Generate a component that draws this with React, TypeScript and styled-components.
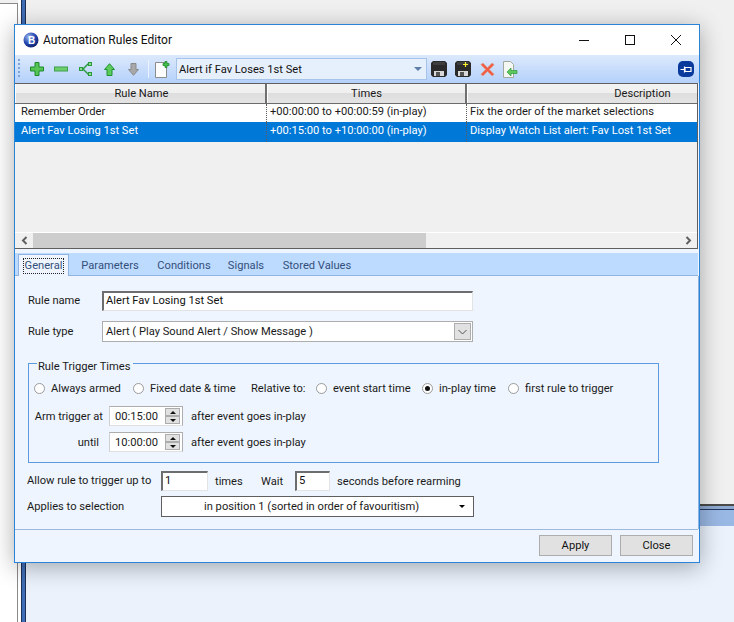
import React from "react";
import styled, { createGlobalStyle } from "styled-components";

const GlobalStyle = createGlobalStyle`
  html, body {
    margin: 0;
    padding: 0;
    background: #ffffff;
    overflow: hidden;
  }
  * {
    box-sizing: border-box;
  }
`;

const Desktop = styled.div`
  position: relative;
  display: flex;
  width: 734px;
  height: 622px;
  overflow: hidden;
  background: #f0f0f0;
  font-family: Roboto, "Liberation Sans", sans-serif;
  font-size: 11.15px;
  color: #1a1a1a;
`;
const BackMargin = styled.div`
  width: 18px;
  margin-top: 3px;
  background: #ffffff;
  border-top: 1px solid #8a8a8a;
  border-right: 1px solid #8a8a8a;
`;
const BackGap = styled.div`
  width: 3px;
  background: #ffffff;
`;
const BackStripe = styled.div`
  width: 5px;
  background: #3f6db5;
  border-left: 1px solid #1d2f55;
  border-right: 1px solid #1d2f55;
`;
const BackMain = styled.div`
  flex: 1;
  display: flex;
  flex-direction: column;
`;
const BackPanel = styled.div`
  height: 504px;
  background: #f0f0f0;
`;
const BackBand = styled.div`
  height: 22px;
  background: linear-gradient(
    #4a4a4a 0 2px,
    #8fa9d0 2px 5px,
    #1f3560 5px 6px,
    #9ab8e4 6px
  );
`;
const BackFill = styled.div`
  flex: 1;
  background: #ebf2fc;
`;

const Window = styled.div`
  position: absolute;
  left: 14px;
  top: 24px;
  width: 686px;
  height: 539px;
  display: flex;
  flex-direction: column;
  background: #eef5fe;
  border: 1px solid #2b83d8;
  box-shadow: 0 4px 22px rgba(0, 0, 0, 0.32);
`;

const TitleBar = styled.div`
  height: 30px;
  flex: none;
  display: flex;
  align-items: center;
  background: #ffffff;
  padding-left: 8px;
`;
const TitleText = styled.span`
  margin-left: 4px;
  font-size: 12px;
  flex: 1;
  color: #111111;
`;
const CaptionButton = styled.div`
  width: 46px;
  height: 30px;
  display: flex;
  align-items: center;
  justify-content: center;
`;

const Toolbar = styled.div`
  height: 28px;
  flex: none;
  display: flex;
  align-items: center;
  padding-left: 2px;
  padding-right: 1px;
  background: linear-gradient(#dce9fc, #b4d1fb);
`;
const Gripper = styled.div`
  width: 7px;
  height: 20px;
  margin-left: 1px;
  background-image: linear-gradient(#7da4d8 50%, transparent 50%);
  background-size: 2px 4px;
  background-repeat: repeat-y;
`;
const ToolButton = styled.div`
  width: 24px;
  height: 24px;
  flex: none;
  display: flex;
  align-items: center;
  justify-content: center;
`;
const ToolSeparator = styled.div`
  width: 1px;
  height: 18px;
  margin-left: 3px;
  margin-right: 1px;
  flex: none;
  background: #eaf3ff;
`;
const ToolCombo = styled.div`
  width: 251px;
  height: 22px;
  flex: none;
  margin-left: 2px;
  display: flex;
  align-items: center;
  justify-content: space-between;
  padding: 0 4px 0 2px;
  background: #e6effc;
  border: 1px solid #a6c4ea;
  color: #111111;
`;
const ToolCaret = styled.div`
  width: 0;
  height: 0;
  border-left: 4px solid transparent;
  border-right: 4px solid transparent;
  border-top: 4px solid #5f7fa8;
`;
const ToolSpacer = styled.div`
  flex: 1;
`;

const Grid = styled.div`
  height: 166px;
  flex: none;
  margin-right: 1px;
  display: flex;
  flex-direction: column;
  background: #f0f0f0;
  border-top: 1px solid #5f5f5f;
  border-bottom: 1px solid #5f5f5f;
  border-right: 1px solid #5f5f5f;
`;
const HeaderRow = styled.div`
  height: 20px;
  flex: none;
  display: grid;
  grid-template-columns: 252px 200px 1fr;
  border-bottom: 1px solid #6b6b6b;
`;
const HeaderCell = styled.div<{ $last?: boolean; $indent?: number }>`
  display: flex;
  align-items: center;
  justify-content: center;
  padding-left: ${(p) => p.$indent ?? 0}px;
  background: linear-gradient(#f2f2f2 0%, #f0f0f0 45%, #dedede 50%, #e4e4e4 100%);
  border-left: 1px solid #ffffff;
  border-right: ${(p) => (p.$last ? "0" : "2px solid #6f6f6f")};
  color: #1a1a1a;
`;
const DataRow = styled.div<{ $selected?: boolean; $height: number }>`
  height: ${(p) => p.$height}px;
  flex: none;
  display: grid;
  grid-template-columns: 252px 200px 1fr;
  background: ${(p) => (p.$selected ? "#0078d7" : "#ffffff")};
  color: ${(p) => (p.$selected ? "#ffffff" : "#1a1a1a")};
`;
const DataCell = styled.div<{ $first?: boolean }>`
  display: flex;
  align-items: center;
  padding-left: ${(p) => (p.$first ? "6px" : "3px")};
  padding-bottom: 3px;
  white-space: nowrap;
  overflow: hidden;
  border-right: ${(p) => (p.$first ? "1px dotted #5a5a5a" : "0")};
  &:nth-child(2) {
    border-right: 1px dotted #5a5a5a;
  }
`;
const GridBody = styled.div`
  flex: 1;
`;
const HScroll = styled.div`
  height: 16px;
  flex: none;
  display: flex;
  align-items: center;
  background: #f0f0f0;
  border-top: 1px solid #ffffff;
`;
const ScrollArrow = styled.div`
  width: 18px;
  flex: none;
  display: flex;
  justify-content: center;
`;
const ScrollThumb = styled.div`
  width: 393px;
  height: 15px;
  flex: none;
  background: #cdcdcd;
`;

const TabStrip = styled.div`
  height: 23px;
  flex: none;
  margin-top: 4px;
  margin-right: 1px;
  display: flex;
  align-items: flex-end;
  padding-left: 3px;
  background: #bddaff;
  border-bottom: 1px solid #8fb4e3;
`;
const Tab = styled.div<{ $active?: boolean; $width: number }>`
  width: ${(p) => p.$width}px;
  height: ${(p) => (p.$active ? "22px" : "21px")};
  flex: none;
  display: flex;
  align-items: center;
  justify-content: center;
  padding-top: 1px;
  color: #33507a;
  background: ${(p) => (p.$active ? "#eef5fe" : "transparent")};
  border: ${(p) => (p.$active ? "1px solid #8fb4e3" : "0")};
  border-bottom: 0;
  margin-bottom: ${(p) => (p.$active ? "-1px" : "0")};
`;
const FocusBox = styled.span`
  padding: 0 1px;
  outline: 1px dotted #222222;
  outline-offset: 0;
  line-height: 14px;
`;

const Form = styled.div`
  flex: 1;
  display: flex;
  flex-direction: column;
  padding: 15px 0 0 13px;
  border-right: 1px solid #8fb4e3;
`;
const FormRow = styled.div<{ $mt?: number }>`
  display: flex;
  align-items: center;
  margin-top: ${(p) => p.$mt ?? 0}px;
`;
const FieldLabel = styled.span<{ $width: number; $outdent?: boolean; $low?: boolean }>`
  width: ${(p) => p.$width}px;
  margin-left: ${(p) => (p.$outdent ? "-1px" : "0")};
  flex: none;
  white-space: nowrap;
  padding-bottom: ${(p) => (p.$low ? "0" : "2px")};
`;
const TextBox = styled.div<{ $width: number; $height?: number }>`
  width: ${(p) => p.$width}px;
  height: ${(p) => p.$height ?? 20}px;
  flex: none;
  display: flex;
  align-items: center;
  padding-left: 2px;
  padding-bottom: 2px;
  background: #ffffff;
  border: 1px solid #e3e3e3;
  border-top: 2px solid #6d6d6d;
  border-left: 2px solid #6d6d6d;
  color: #111111;
`;
const RuleTypeSelect = styled.div`
  width: 371px;
  height: 21px;
  flex: none;
  display: flex;
  align-items: center;
  justify-content: space-between;
  padding-left: 3px;
  padding-right: 1px;
  background: #ffffff;
  border: 1px solid #adadad;
`;
const SelectArrow = styled.div`
  width: 17px;
  height: 17px;
  display: flex;
  align-items: center;
  justify-content: center;
  background: #e1e1e1;
  border: 1px solid #adadad;
`;
const GroupBox = styled.fieldset`
  width: 631px;
  height: 108px;
  flex: none;
  margin: 13px 0 0 0;
  padding: 7px 0 0 5px;
  border: 1px solid #5c9be0;
  min-inline-size: 0;
`;
const GroupLegend = styled.legend`
  margin-left: 3px;
  padding: 6px 3px 0 1px;
  font-size: 11.15px;
  line-height: 11px;
`;
const RadioRow = styled.div`
  display: flex;
  align-items: center;
  height: 18px;
`;
const RadioOption = styled.span<{ $width: number }>`
  width: ${(p) => p.$width}px;
  flex: none;
  display: flex;
  align-items: center;
  white-space: nowrap;
`;
const RadioDot = styled.span<{ $checked?: boolean }>`
  width: 11px;
  height: 11px;
  flex: none;
  margin-right: 6px;
  border-radius: 50%;
  background: #ffffff;
  border: 1px solid #9a9a9a;
  display: flex;
  align-items: center;
  justify-content: center;
  &::after {
    content: "";
    width: 5px;
    height: 5px;
    border-radius: 50%;
    background: ${(p) => (p.$checked ? "#111111" : "transparent")};
  }
`;
const TimeRow = styled.div<{ $mt: number }>`
  display: flex;
  align-items: center;
  height: 20px;
  margin-top: ${(p) => p.$mt}px;
`;
const TimeLabel = styled.span<{ $pad: number }>`
  width: 75px;
  flex: none;
  padding-right: ${(p) => p.$pad}px;
  text-align: right;
  white-space: nowrap;
`;
const Spinner = styled.div`
  width: 74px;
  height: 20px;
  flex: none;
  display: flex;
  align-items: center;
  justify-content: space-between;
  padding-left: 5px;
  background: #ffffff;
  border: 1px solid #adadad;
  border-left: 1px solid #cfcfcf;
  border-bottom: 1px solid #e0e0e0;
`;
const SpinButtons = styled.div`
  width: 15px;
  height: 16px;
  margin-right: 2px;
  display: flex;
  flex-direction: column;
`;
const SpinButton = styled.div<{ $down?: boolean }>`
  flex: 1;
  display: flex;
  align-items: center;
  justify-content: center;
  background: #e1e1e1;
  border: 1px solid #adadad;
  &::after {
    content: "";
    border-left: 3px solid transparent;
    border-right: 3px solid transparent;
    border-bottom: ${(p) => (p.$down ? "0" : "3px solid #111111")};
    border-top: ${(p) => (p.$down ? "3px solid #111111" : "0")};
  }
`;
const TimeHint = styled.span`
  margin-left: 8px;
`;
const InlineText = styled.span<{ $ml?: number; $width?: number }>`
  margin-left: ${(p) => p.$ml ?? 0}px;
  width: ${(p) => (p.$width ? `${p.$width}px` : "auto")};
  flex: none;
  white-space: nowrap;
`;
const PlainSelect = styled.div`
  width: 313px;
  height: 21px;
  flex: none;
  display: flex;
  align-items: center;
  padding-left: 42px;
  padding-right: 8px;
  padding-bottom: 1px;
  justify-content: space-between;
  background: #ffffff;
  border: 1px solid #5f5f5f;
`;
const BlackCaret = styled.div`
  width: 0;
  height: 0;
  border-left: 3px solid transparent;
  border-right: 3px solid transparent;
  border-top: 3px solid #000000;
`;
const Footer = styled.div`
  height: 33px;
  flex: none;
  margin-right: 1px;
  display: flex;
  align-items: flex-start;
  justify-content: flex-end;
  gap: 8px;
  padding: 5px 5px 0 0;
  border-top: 1px solid #9db9dc;
`;
const FooterButton = styled.div`
  width: 73px;
  height: 21px;
  display: flex;
  align-items: center;
  justify-content: center;
  background: #e1e1e1;
  border: 1px solid #adadad;
  color: #111111;
`;

const Plus = () => (
  <svg width="14" height="14" viewBox="0 0 14 14">
    <path d="M5 0.500h4v4.500h4.500v4H9v4.500H5V9H0.500V5H5z" fill="#55c455" stroke="#1d8a2c" />
  </svg>
);
const Minus = () => (
  <svg width="14" height="6" viewBox="0 0 14 6">
    <rect x="0.500" y="1" width="13" height="4" fill="#6ccf6c" stroke="#3f9e4a" />
  </svg>
);
const Branch = () => (
  <svg width="13" height="14" viewBox="0 0 13 14" fill="none">
    <path d="M2 7h2l5-5h1M4 7l5 5h1" stroke="#2a9a3c" strokeWidth="1.400" />
    <rect x="0.500" y="5.500" width="3" height="3" fill="#8fdc8f" stroke="#2a9a3c" />
    <rect x="9.500" y="0.500" width="3" height="3" fill="#8fdc8f" stroke="#2a9a3c" />
    <rect x="9.500" y="10.500" width="3" height="3" fill="#8fdc8f" stroke="#2a9a3c" />
  </svg>
);
const UpArrow = () => (
  <svg width="11" height="13" viewBox="0 0 11 13">
    <path d="M5.500 0.700l5 5.800H8v6H3v-6H0.500z" fill="#5ccb5c" stroke="#1f9232" />
  </svg>
);
const DownArrow = () => (
  <svg width="11" height="13" viewBox="0 0 11 13">
    <path d="M5.500 12.300l-5-5.800H3v-6h5v6h2.500z" fill="#a8a8a8" stroke="#8a8a8a" />
  </svg>
);
const NewDoc = () => (
  <svg width="15" height="17" viewBox="0 0 15 17">
    <path d="M0.500 1.500h11v15h-11z" fill="#fdfdfd" stroke="#8c8c8c" />
    <path d="M10 0.500h2v2h2v2h-2v2h-2v-2H8v-2h2z" fill="#46c04e" stroke="#1f8a2c" strokeWidth="0.800" />
  </svg>
);
const Floppy = ({ plus }: { plus?: boolean }) => (
  <svg width="16" height="16" viewBox="0 0 16 16">
    <path d="M2 0h12l2 2v12l-2 2H2l-2-2V2z" fill="#2a2a2a" />
    <rect x="2" y="1" width="12" height="3" fill="#3e3e3e" />
    <rect x="3" y="10" width="10" height="5" fill="#d8d8d8" />
    <rect x="5" y="11" width="4" height="4" fill="#555555" />
    {plus && <path d="M8 3.500h5M10.500 1v5" stroke="#f6ee30" strokeWidth="1.200" />}
  </svg>
);
const RedCross = () => (
  <svg width="15" height="15" viewBox="0 0 16 16">
    <path
      d="M1 3l2-2 5 5 5-5 2 2-5 5 5 5-2 2-5-5-5 5-2-2 5-5z"
      fill="#f25c45"
      stroke="#d9a090"
      strokeWidth="0.800"
    />
  </svg>
);
const ImportDoc = () => (
  <svg width="16" height="17" viewBox="0 0 16 17">
    <path d="M0.500 0.500h7l3 3v13h-10z" fill="#f5f8f2" stroke="#a3a89e" />
    <path d="M4 11l4-4v2.500h6v3H8V15z" fill="#5ec95a" stroke="#2c9a3a" strokeWidth="0.700" />
  </svg>
);
const PinBadge = () => (
  <svg width="16" height="16" viewBox="0 0 16 16">
    <rect width="16" height="16" rx="5" fill="#0a3a9c" />
    <path d="M2.500 8.500H6M6.500 5.500v6M7 6.500h6v4H7z" fill="none" stroke="#ffffff" strokeWidth="1.200" />
  </svg>
);
const Logo = () => (
  <svg width="16" height="16" viewBox="0 0 16 16">
    <defs>
      <radialGradient id="globe" cx="0.35" cy="0.3" r="0.8">
        <stop offset="0" stopColor="#9bb7ee" />
        <stop offset="0.55" stopColor="#2447b0" />
        <stop offset="1" stopColor="#0b1a5c" />
      </radialGradient>
    </defs>
    <circle cx="8" cy="8" r="7.500" fill="url(#globe)" />
    <text x="5" y="11.500" fontSize="10" fontWeight="700" fill="#ffffff" fontFamily="Liberation Sans">
      B
    </text>
  </svg>
);
const MinGlyph = () => (
  <svg width="10" height="10" viewBox="0 0 10 10">
    <path d="M0 5.500h10" stroke="#111111" />
  </svg>
);
const MaxGlyph = () => (
  <svg width="10" height="10" viewBox="0 0 10 10">
    <rect x="0.500" y="0.500" width="9" height="9" fill="none" stroke="#111111" />
  </svg>
);
const CloseGlyph = () => (
  <svg width="10" height="10" viewBox="0 0 10 10">
    <path d="M0 0l10 10M10 0L0 10" stroke="#111111" />
  </svg>
);
const ChevronSmall = ({ right }: { right?: boolean }) => (
  <svg width="7" height="9" viewBox="0 0 7 9">
    <path d={right ? "M1.500 1l3.500 3.500L1.500 8" : "M5.500 1L2 4.500 5.500 8"} fill="none" stroke="#606060" strokeWidth="2" />
  </svg>
);
const ChevronDown = () => (
  <svg width="9" height="6" viewBox="0 0 9 6">
    <path d="M0.500 1l4 4 4-4" fill="none" stroke="#555555" />
  </svg>
);

const rules = [
  {
    name: "Remember Order",
    times: "+00:00:00 to +00:00:59 (in-play)",
    description: "Fix the order of the market selections",
    height: 18,
  },
  {
    name: "Alert Fav Losing 1st Set",
    times: "+00:15:00 to +10:00:00 (in-play)",
    description: "Display Watch List alert: Fav Lost 1st Set",
    height: 20,
    selected: true,
  },
];

const tabs = [
  { label: "General", width: 51, active: true },
  { label: "Parameters", width: 82 },
  { label: "Conditions", width: 66 },
  { label: "Signals", width: 58 },
  { label: "Stored Values", width: 84 },
];

export default function App() {
  return (
    <>
      <GlobalStyle />
      <Desktop>
        <BackMargin />
        <BackGap />
        <BackStripe />
        <BackMain>
          <BackPanel />
          <BackBand />
          <BackFill />
        </BackMain>

        <Window>
          <TitleBar>
            <Logo />
            <TitleText>Automation Rules Editor</TitleText>
            <CaptionButton>
              <MinGlyph />
            </CaptionButton>
            <CaptionButton>
              <MaxGlyph />
            </CaptionButton>
            <CaptionButton>
              <CloseGlyph />
            </CaptionButton>
          </TitleBar>

          <Toolbar>
            <Gripper />
            <ToolButton>
              <Plus />
            </ToolButton>
            <ToolButton>
              <Minus />
            </ToolButton>
            <ToolButton>
              <Branch />
            </ToolButton>
            <ToolButton>
              <UpArrow />
            </ToolButton>
            <ToolButton>
              <DownArrow />
            </ToolButton>
            <ToolSeparator />
            <ToolButton>
              <NewDoc />
            </ToolButton>
            <ToolCombo>
              Alert if Fav Loses 1st Set
              <ToolCaret />
            </ToolCombo>
            <ToolButton>
              <Floppy />
            </ToolButton>
            <ToolButton>
              <Floppy plus />
            </ToolButton>
            <ToolButton>
              <RedCross />
            </ToolButton>
            <ToolButton>
              <ImportDoc />
            </ToolButton>
            <ToolSpacer />
            <ToolButton>
              <PinBadge />
            </ToolButton>
          </Toolbar>

          <Grid>
            <HeaderRow>
              <HeaderCell $indent={2}>Rule Name</HeaderCell>
              <HeaderCell>Times</HeaderCell>
              <HeaderCell $last $indent={120}>
                Description
              </HeaderCell>
            </HeaderRow>
            {rules.map((rule) => (
              <DataRow key={rule.name} $selected={rule.selected} $height={rule.height}>
                <DataCell $first>{rule.name}</DataCell>
                <DataCell>{rule.times}</DataCell>
                <DataCell>{rule.description}</DataCell>
              </DataRow>
            ))}
            <GridBody />
            <HScroll>
              <ScrollArrow>
                <ChevronSmall />
              </ScrollArrow>
              <ScrollThumb />
              <ToolSpacer />
              <ScrollArrow>
                <ChevronSmall right />
              </ScrollArrow>
            </HScroll>
          </Grid>

          <TabStrip>
            {tabs.map((tab) => (
              <Tab key={tab.label} $active={tab.active} $width={tab.width}>
                {tab.active ? <FocusBox>{tab.label}</FocusBox> : tab.label}
              </Tab>
            ))}
          </TabStrip>

          <Form>
            <FormRow>
              <FieldLabel $width={74}>Rule name</FieldLabel>
              <TextBox $width={371}>Alert Fav Losing 1st Set</TextBox>
            </FormRow>
            <FormRow $mt={10}>
              <FieldLabel $width={74} $low>
                Rule type
              </FieldLabel>
              <RuleTypeSelect>
                Alert ( Play Sound Alert / Show Message )
                <SelectArrow>
                  <ChevronDown />
                </SelectArrow>
              </RuleTypeSelect>
            </FormRow>

            <GroupBox>
              <GroupLegend>Rule Trigger Times</GroupLegend>
              <RadioRow>
                <RadioOption $width={99}>
                  <RadioDot />
                  Always armed
                </RadioOption>
                <RadioOption $width={118}>
                  <RadioDot />
                  Fixed date &amp; time
                </RadioOption>
                <RadioOption $width={65}>Relative to:</RadioOption>
                <RadioOption $width={106}>
                  <RadioDot />
                  event start time
                </RadioOption>
                <RadioOption $width={86}>
                  <RadioDot $checked />
                  in-play time
                </RadioOption>
                <RadioOption $width={120}>
                  <RadioDot />
                  first rule to trigger
                </RadioOption>
              </RadioRow>
              <TimeRow $mt={9}>
                <TimeLabel $pad={6}>Arm trigger at</TimeLabel>
                <Spinner>
                  00:15:00
                  <SpinButtons>
                    <SpinButton />
                    <SpinButton $down />
                  </SpinButtons>
                </Spinner>
                <TimeHint>after event goes in-play</TimeHint>
              </TimeRow>
              <TimeRow $mt={6}>
                <TimeLabel $pad={10}>until</TimeLabel>
                <Spinner>
                  10:00:00
                  <SpinButtons>
                    <SpinButton />
                    <SpinButton $down />
                  </SpinButtons>
                </Spinner>
                <TimeHint>after event goes in-play</TimeHint>
              </TimeRow>
            </GroupBox>

            <FormRow $mt={8}>
              <FieldLabel $width={134} $outdent>
                Allow rule to trigger up to
              </FieldLabel>
              <TextBox $width={47}>1</TextBox>
              <InlineText $ml={7} $width={46}>
                times
              </InlineText>
              <InlineText $width={34}>Wait</InlineText>
              <TextBox $width={35}>5</TextBox>
              <InlineText $ml={7}>seconds before rearming</InlineText>
            </FormRow>
            <FormRow $mt={5}>
              <FieldLabel $width={134} $outdent $low>
                Applies to selection
              </FieldLabel>
              <PlainSelect>
                in position 1 (sorted in order of favouritism)
                <BlackCaret />
              </PlainSelect>
            </FormRow>
          </Form>

          <Footer>
            <FooterButton>Apply</FooterButton>
            <FooterButton>Close</FooterButton>
          </Footer>
        </Window>
      </Desktop>
    </>
  );
}
